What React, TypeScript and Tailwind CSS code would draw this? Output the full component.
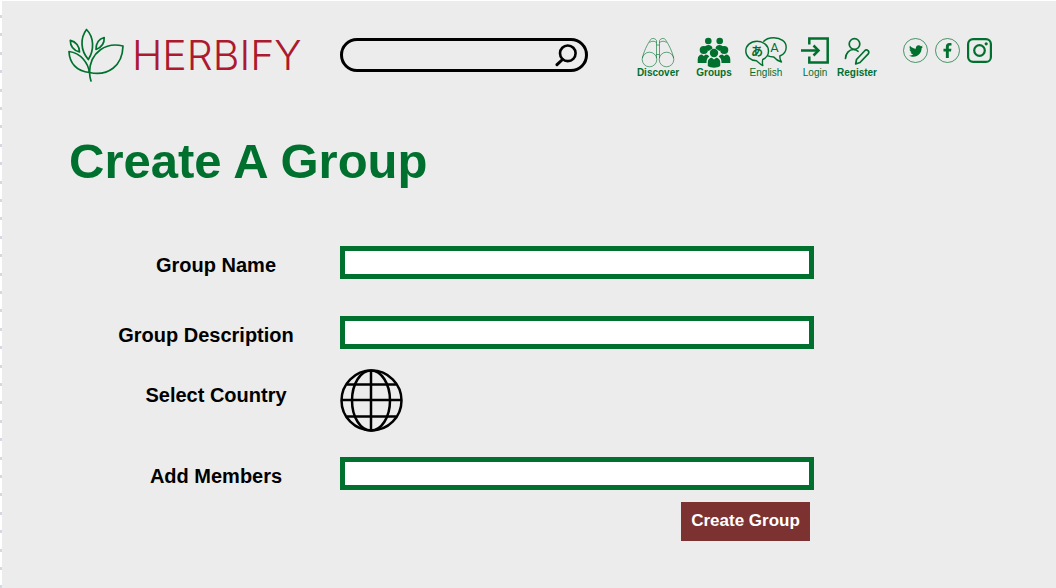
import React from "react";
import { FaTwitter, FaFacebookF } from "react-icons/fa";

const GREEN = "#00702e";

function LeafLogo() {
  return (
    <svg width="56" height="54" viewBox="0 0 56 54" fill="none" stroke={GREEN} strokeWidth="1.7" strokeLinejoin="round" strokeLinecap="round" aria-hidden="true">
      <path d="M18.500 1.500C12.200 10 12.200 22 20.300 31.500C26.500 22 26 9 18.500 1.500Z" />
      <path d="M2.300 12.300C2.300 18 5.500 22.500 11.500 24C11.500 18.500 8 13.500 2.300 12.300Z" />
      <path d="M36.200 9.500C31 11 27.800 15 28 21.500C33.500 19.500 36.500 15.500 36.200 9.500Z" />
      <path d="M1 23.500C1.500 35 8.500 43.500 21.500 44.500C20 35 13 25 1 23.500Z" />
      <path d="M55 18C39 14 22 23 21.500 44.500C40 48.500 54.500 38 55 18Z" />
      <path d="M21.500 44C21.600 47 22 50 23 53" />
    </svg>
  );
}

function BinocularsIcon() {
  return (
    <svg width="34" height="31" viewBox="0 0 34 31" fill="none" stroke={GREEN} strokeOpacity="0.75" strokeWidth="0.8" strokeLinejoin="round" aria-hidden="true">
      <circle cx="8.500" cy="22.500" r="7.300" />
      <circle cx="25.500" cy="22.500" r="7.300" />
      <path d="M1.300 21C3 14 6 8 9 3.500M32.700 21C31 14 28 8 25 3.500" />
      <path d="M9 3.500C10 .8 14 .8 15.500 3.500V21M25 3.500C24 .8 20 .8 18.500 3.500V21" />
      <path d="M8.500 5.500C10.500 3.800 13.500 3.800 15.500 5.500M25.500 5.500C23.500 3.800 20.500 3.800 18.500 5.500" />
      <path d="M15.500 8H18.500M15.500 17.500H18.500" />
    </svg>
  );
}

function GroupsIcon() {
  return (
    <svg width="34" height="31" viewBox="0 0 34 31" fill={GREEN} aria-hidden="true">
      <circle cx="11.300" cy="4" r="3.300" />
      <circle cx="22.700" cy="4" r="3.300" />
      <path d="M7.500 11C8 8.800 9.500 8 11.300 8C14 8 15.300 9.300 15.500 11.500L11.500 14ZM26.500 11C26 8.800 24.500 8 22.700 8C20 8 18.700 9.300 18.500 11.500L22.500 14Z" />
      <circle cx="6.800" cy="13" r="4.100" />
      <circle cx="27.200" cy="13" r="4.100" />
      <path d="M.7 26V22.500C.7 19.500 2.800 17.600 5 17.600L6.800 19L8.600 17.600C10.300 17.600 11.500 18.500 12.200 19.700C10 21 9.500 23 9.500 26ZM33.300 26V22.500C33.300 19.500 31.200 17.600 29 17.600L27.200 19L25.400 17.600C23.700 17.600 22.500 18.500 21.800 19.700C24 21 24.500 23 24.500 26Z" />
      <circle cx="17" cy="16" r="4.200" />
      <path d="M10.800 29V25C10.800 22.500 12.800 20.800 14.800 20.800L17 22.600L19.200 20.800C21.200 20.800 23.200 22.500 23.200 25V29C20 31.200 14 31.200 10.800 29Z" />
    </svg>
  );
}

function LanguageIcon() {
  return (
    <svg width="42" height="31" viewBox="0 0 42 31" fill="none" stroke={GREEN} strokeWidth="1.400" strokeLinejoin="round" aria-hidden="true">
      <path d="M12 4.300C5.500 4.300 .8 8.600 .8 14C.8 19.500 5.500 23.600 11.500 23.700C13.500 25.500 15.500 27.500 17.800 28.500C17.300 26.800 17.300 24.800 17.700 22.500C21.300 20.900 23.500 17.800 23.500 14C23.500 8.600 18.500 4.300 12 4.300Z" />
      <path d="M18.300 4.800C20.500 2 24.500 .7 28.800 .7C35.800 .7 41.200 4.800 41.200 10.200C41.200 14.300 38.600 17.500 34.800 19C34.600 21 35.300 23 36.500 25C33.300 24 30.600 22.300 28.800 20C26.500 20 24.300 19.500 22.300 18.600" />
      <text x="12" y="18.500" textAnchor="middle" fontSize="12" fontWeight="700" fill={GREEN} stroke="none" fontFamily="'Noto Sans CJK JP', sans-serif">あ</text>
      <text x="29.500" y="15" textAnchor="middle" fontSize="13" fontWeight="400" fill={GREEN} stroke="none" fontFamily="Roboto, sans-serif">A</text>
    </svg>
  );
}

function LoginIcon() {
  return (
    <svg width="28" height="31" viewBox="0 0 28 31" fill="none" stroke={GREEN} strokeWidth="2.500" aria-hidden="true">
      <path d="M8.300 7.500V1.500H26.700V25.500H8.300V19.500" />
      <path d="M0 13.500H17" />
      <path d="M12.500 8.500L17.500 13.500L12.500 18.500" />
    </svg>
  );
}

function RegisterIcon() {
  return (
    <svg width="26" height="31" viewBox="0 0 26 31" fill="none" stroke={GREEN} strokeWidth="1.700" strokeLinejoin="round" strokeLinecap="round" aria-hidden="true">
      <circle cx="10.500" cy="7" r="5.300" />
      <path d="M1.500 21.500C1.700 16.500 5 12.500 9.500 12.500C11.500 12.500 13 13.200 14 14.300" />
      <path d="M11.700 27L12.500 22.500L20.500 14C21.600 12.800 23 12.800 24 13.700C25 14.700 25 16 24 17.200L16 25.500Z" />
    </svg>
  );
}

function InstagramIcon() {
  return (
    <svg width="25" height="25" viewBox="0 0 25 25" fill="none" stroke={GREEN} strokeWidth="2.200" aria-hidden="true">
      <rect x="1.100" y="1.100" width="22.800" height="22.800" rx="5" />
      <circle cx="12.500" cy="12.500" r="5.300" />
      <circle cx="19.200" cy="5.800" r="1.600" fill={GREEN} stroke="none" />
    </svg>
  );
}

function GlobeIcon() {
  return (
    <svg width="63" height="63" viewBox="0 0 63 63" fill="none" stroke="#000" strokeWidth="2.500" aria-hidden="true">
      <circle cx="31.500" cy="31.500" r="30" />
      <ellipse cx="31" cy="31.500" rx="19" ry="30" />
      <path d="M31 1V62M1 31H62M7 15.500H56M7 47.500H56" />
    </svg>
  );
}

function SearchIcon() {
  return (
    <svg width="24" height="24" viewBox="0 0 24 24" fill="none" stroke="#000" strokeLinecap="round" aria-hidden="true">
      <circle cx="12.800" cy="10.300" r="7.800" strokeWidth="2.600" />
      <path d="M7.500 16.500L2 21.700" strokeWidth="3" />
    </svg>
  );
}

type NavItemProps = {
  label: string;
  bold?: boolean;
  className: string;
  children: React.ReactNode;
};

function NavItem({ label, bold, className, children }: NavItemProps) {
  return (
    <a href="#" className={`flex flex-col items-center text-[10px] leading-3 ${bold ? "font-bold" : ""} ${className}`}>
      <span className="flex h-[30px] justify-center">{children}</span>
      <span>{label}</span>
    </a>
  );
}

const fieldClass = "h-[33px] w-full max-w-[474px] border-[5px] border-[#00702e] bg-white px-2 text-base text-black outline-none";
const labelClass = "w-[248px] shrink-0 text-center";

export default function App() {
  return (
    <div className="flex min-h-screen bg-white pt-px font-['Liberation_Sans',Arial,sans-serif]">
      <div className="w-[2px] shrink-0 bg-[repeating-linear-gradient(to_bottom,#fff_0px,#fff_14px,#d3d8e2_14px,#d3d8e2_17px,#fff_17px,#fff_18.4px)]" />
      <div className="min-w-0 grow bg-[#ececec]">
        <header className="flex items-start pt-[27px] pl-[66px]">
          <a href="#" className="flex w-[272px] shrink-0 gap-2">
            <LeafLogo />
            <span className="pt-[3px] font-['Inter',sans-serif] text-[41px] leading-[48px] font-light text-[#ac1a2f]">HERBIFY</span>
          </a>
          <form role="search" className="mt-[10px] flex h-[34px] w-[248px] shrink-0 items-center rounded-full border-[3px] border-black pr-1.5 pl-4" onSubmit={(e) => e.preventDefault()}>
            <input type="search" aria-label="Search" className="min-w-0 grow bg-transparent text-sm outline-none" />
            <button type="submit" aria-label="Search">
              <SearchIcon />
            </button>
          </form>
          <nav className="mt-[9px] ml-[49px] flex shrink-0 text-[#00702e]">
            <NavItem label="Discover" bold className="w-[42px]"><BinocularsIcon /></NavItem>
            <NavItem label="Groups" bold className="ml-4 w-[38px]"><GroupsIcon /></NavItem>
            <NavItem label="English" className="ml-3 w-[42px]"><LanguageIcon /></NavItem>
            <NavItem label="Login" className="ml-3.5 w-7"><LoginIcon /></NavItem>
            <NavItem label="Register" bold className="ml-2 w-10"><RegisterIcon /></NavItem>
          </nav>
          <div className="mt-[10px] ml-[26px] flex shrink-0 gap-[7px] text-[#00702e]">
            <a href="#" aria-label="Twitter" className="flex size-[25px] items-center justify-center rounded-full border border-[#00702e]/70">
              <FaTwitter size={14} />
            </a>
            <a href="#" aria-label="Facebook" className="flex size-[25px] items-center justify-center rounded-full border border-[#00702e]/70">
              <FaFacebookF size={15} />
            </a>
            <a href="#" aria-label="Instagram">
              <InstagramIcon />
            </a>
          </div>
        </header>

        <main className="pb-10">
          <h1 className="mt-[51px] ml-[67px] text-[49px] leading-[56px] font-bold text-[#00702e]">Create A Group</h1>
          <form className="mt-[57px] mr-6 ml-[90px] max-w-[722px] text-xl font-bold text-black" onSubmit={(e) => e.preventDefault()}>
            <div className="flex items-end">
              <label htmlFor="group-name" className={labelClass}>Group Name</label>
              <input id="group-name" type="text" className={fieldClass} />
            </div>
            <div className="mt-[37px] flex items-end">
              <label htmlFor="group-description" className={`${labelClass} pr-5`}>Group Description</label>
              <input id="group-description" type="text" className={fieldClass} />
            </div>
            <div className="mt-5 flex items-start">
              <label htmlFor="country" className={`${labelClass} pt-3`}>Select Country</label>
              <button id="country" type="button">
                <GlobeIcon />
              </button>
            </div>
            <div className="mt-[25px] flex items-end">
              <label htmlFor="members" className={labelClass}>Add Members</label>
              <input id="members" type="text" className={fieldClass} />
            </div>
            <div className="mt-3 flex justify-end pr-1">
              <button type="submit" className="h-[39px] w-[129px] bg-[#7d3232] pb-0.5 text-[17px] font-bold text-white">Create Group</button>
            </div>
          </form>
        </main>
      </div>
    </div>
  );
}
